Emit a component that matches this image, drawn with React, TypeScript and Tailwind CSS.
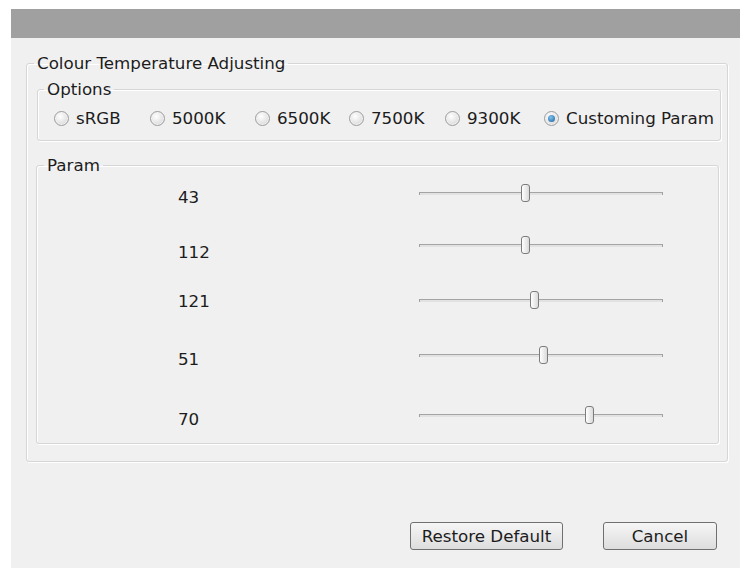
const OPTIONS = [
  { label: 'sRGB', width: 'w-[96px]', checked: false },
  { label: '5000K', width: 'w-[105px]', checked: false },
  { label: '6500K', width: 'w-[94px]', checked: false },
  { label: '7500K', width: 'w-[96px]', checked: false },
  { label: '9300K', width: 'w-[99px]', checked: false },
  { label: 'Customing Param', width: 'w-auto', checked: true },
];

const PARAMS = [
  { value: 43, pos: 106, row: 'h-[52px]', text: 'mt-[12px]', slider: 'mt-[9px]' },
  { value: 112, pos: 106, row: 'h-[52px]', text: 'mt-[15px]', slider: 'mt-[9px]' },
  { value: 121, pos: 115, row: 'h-[56px]', text: 'mt-[12px]', slider: 'mt-[12px]' },
  { value: 51, pos: 124, row: 'h-[60px]', text: 'mt-[14px]', slider: 'mt-[11px]' },
  { value: 70, pos: 170, row: 'h-[48px]', text: 'mt-[14px]', slider: 'mt-[11px]' },
];

const groupBox =
  'rounded-[3px] border border-[#d6d6d6] shadow-[inset_1px_1px_0_#ffffff,1px_1px_0_#ffffff]';

export default function App() {
  return (
    <div
      className="h-[584px] w-[750px] bg-white px-[10px] pt-[9px] text-[16.7px] leading-5 text-[#1c1c1c]"
      style={{ fontFamily: '"DejaVu Sans", Verdana, sans-serif' }}
    >
      <div className="ml-[1px] w-[729px]">
        <div className="h-[29px] bg-[#a0a0a0]" />
        <div className="flex h-[530px] flex-col bg-[#f0f0f0]">
          <fieldset className={`ml-[15px] mt-[15px] w-[702px] pb-[17px] ${groupBox}`}>
            <legend className="ml-[7px] px-[3px]">Colour Temperature Adjusting</legend>

            <fieldset className={`ml-[10px] mt-[6px] w-[684px] pb-[12px] ${groupBox}`}>
              <legend className="ml-[6px] px-[3px]">Options</legend>
              <div className="flex items-center pl-[16px] pt-[9px]">
                {OPTIONS.map((opt) => (
                  <label key={opt.label} className={`flex h-5 items-center gap-[7px] ${opt.width}`}>
                    <Radio checked={opt.checked} />
                    <span>{opt.label}</span>
                  </label>
                ))}
              </div>
            </fieldset>

            <fieldset className={`ml-[9px] mt-[14px] w-[683px] ${groupBox}`}>
              <legend className="ml-[7px] px-[3px]">Param</legend>
              {PARAMS.map((p) => (
                <div key={p.value} className={`flex items-start ${p.row}`}>
                  <div className={`ml-[141px] w-[241px] ${p.text}`}>{p.value}</div>
                  <div className={p.slider}>
                    <Slider pos={p.pos} />
                  </div>
                </div>
              ))}
            </fieldset>
          </fieldset>

          <div className="mt-auto flex justify-end gap-[40px] pb-[18px] pr-[23px]">
            <Button label="Restore Default" width="w-[153px]" />
            <Button label="Cancel" width="w-[114px]" />
          </div>
        </div>
      </div>
    </div>
  );
}

function Radio({ checked }: { checked: boolean }) {
  return (
    <span className="flex h-[15px] w-[15px] items-center justify-center rounded-full border border-[#9c9c9c] bg-[radial-gradient(circle_at_40%_35%,#ffffff,#cfcfcf)] shadow-[inset_0_0_0_1px_#f4f4f4]">
      {checked ? (
        <span className="h-[7px] w-[7px] rounded-full bg-[radial-gradient(circle_at_40%_35%,#7fc3f0,#1d5f9c)]" />
      ) : null}
    </span>
  );
}

function Slider({ pos }: { pos: number }) {
  return (
    <div className="relative h-[18px] w-[244px]">
      <div className="absolute left-0 right-0 top-[8px] h-[3px] border-x border-[#a0a0a0] border-t border-t-[#a4a4a4] border-b-white bg-[#e2e2e2]" />
      <div
        className="absolute top-0 h-[18px] w-[9px] rounded-[3px] border border-[#7c7c7c] bg-gradient-to-r from-white to-[#dadada]"
        style={{ left: pos - 4 }}
      />
    </div>
  );
}

function Button({ label, width }: { label: string; width: string }) {
  return (
    <button
      type="button"
      className={`h-[28px] rounded-[3px] border border-[#707070] bg-gradient-to-b from-[#f6f6f6] to-[#dddddd] text-[16.7px] leading-5 text-[#1c1c1c] ${width}`}
    >
      {label}
    </button>
  );
}
